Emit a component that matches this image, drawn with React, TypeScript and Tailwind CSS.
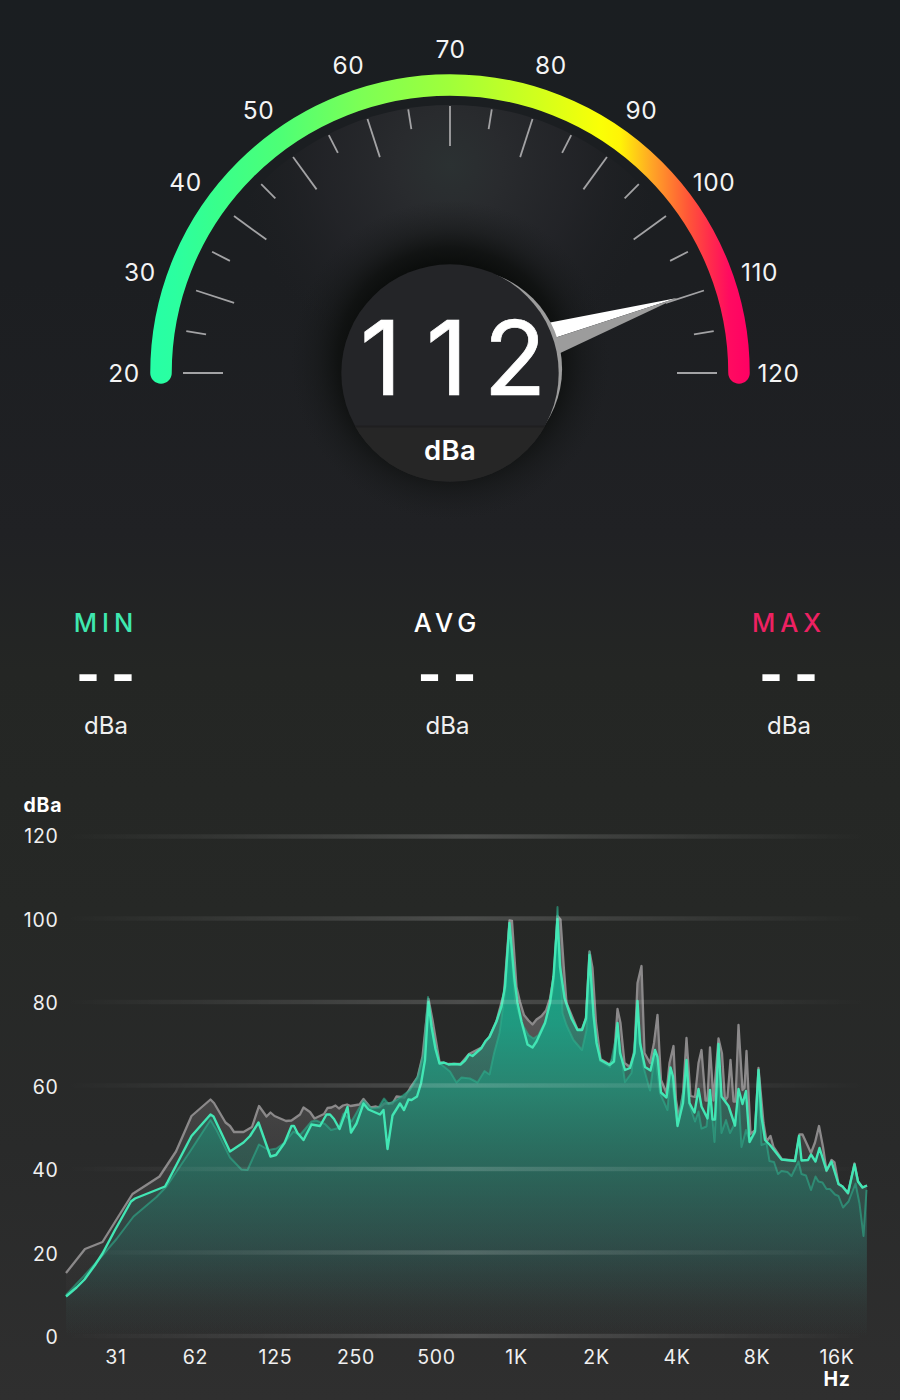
type Point = [number, number]

const CX = 450
const CY = 373

const gaugeLabels = [
  { value: 20, x: 124, y: 382 },
  { value: 30, x: 140, y: 281 },
  { value: 40, x: 185.5, y: 191 },
  { value: 50, x: 258.5, y: 119 },
  { value: 60, x: 348.5, y: 73.5 },
  { value: 70, x: 450.5, y: 58 },
  { value: 80, x: 551, y: 73.5 },
  { value: 90, x: 641.5, y: 119 },
  { value: 100, x: 714, y: 191 },
  { value: 110, x: 759.5, y: 281 },
  { value: 120, x: 778.5, y: 382 },
]

const arcStops = [
  { x: 150, color: '#26ffa6' },
  { x: 175, color: '#2bffa0' },
  { x: 216, color: '#38ff8c' },
  { x: 280, color: '#4dff76' },
  { x: 361, color: '#7cff55' },
  { x: 450, color: '#a0ff3a' },
  { x: 539, color: '#d2ff1c' },
  { x: 600, color: '#faff06' },
  { x: 620, color: '#fff406' },
  { x: 652, color: '#ffa526' },
  { x: 688, color: '#ff5638' },
  { x: 710, color: '#ff2c4c' },
  { x: 729, color: '#ff0b60' },
  { x: 750, color: '#ff0064' },
]

const stats = [
  { label: 'MIN', color: 'text-[#3fe8b0]' },
  { label: 'AVG', color: 'text-white' },
  { label: 'MAX', color: 'text-[#ee2162]' },
]

const gridLines = [
  { value: 120, y: 836.5 },
  { value: 100, y: 918.5 },
  { value: 80, y: 1002 },
  { value: 60, y: 1085.5 },
  { value: 40, y: 1169 },
  { value: 20, y: 1252.5 },
  { value: 0, y: 1336 },
]

const frequencies = [
  { label: '31', x: 116 },
  { label: '62', x: 195.5 },
  { label: '125', x: 275.5 },
  { label: '250', x: 356 },
  { label: '500', x: 436.5 },
  { label: '1K', x: 516.5 },
  { label: '2K', x: 596.5 },
  { label: '4K', x: 677 },
  { label: '8K', x: 757 },
  { label: '16K', x: 837 },
]

const peakTrace: Point[] = [
  [66, 1273], [85, 1249], [102.5, 1242], [116.5, 1219.5], [132.5, 1194], [159.5, 1176.5], [176, 1151.5],
  [191.5, 1116], [210.5, 1099.5], [214, 1103], [225.5, 1122.5], [230, 1126], [234, 1132], [243.5, 1132],
  [252, 1127], [259, 1106], [266.5, 1116.5], [270.5, 1112.5], [274.5, 1116], [286, 1121], [291.5, 1120.5],
  [300, 1114.5], [303.5, 1107.5], [310, 1112], [314.5, 1118.5], [324, 1114], [327.5, 1108], [331.5, 1107.5],
  [335.5, 1105.5], [339, 1108.5], [343, 1105.5], [347, 1104.5], [350.5, 1106], [359.5, 1104.5], [363.5, 1099],
  [370.5, 1107.5], [376, 1106.5], [379.5, 1107.5], [384.5, 1103.5], [392.5, 1103.5], [396.5, 1096.5],
  [404.5, 1097.5], [410.5, 1087.5], [417.5, 1077.5], [422.5, 1056.5], [428.5, 999], [432.5, 1020],
  [439.5, 1062], [448.5, 1064], [460.5, 1064], [469, 1054], [481.5, 1047.5], [489.5, 1036.5], [496.5, 1021],
  [504, 993], [509.5, 920.5], [512, 921], [516.5, 987], [520, 1002], [524, 1015], [528.5, 1020.5], [532.5, 1024.5],
  [536.5, 1019.5], [541.5, 1016], [546, 1010.5], [550, 998.5], [554, 975], [557.5, 916], [560.5, 919.5],
  [564, 970], [566.5, 1003], [577.5, 1029.5], [582, 1029.5], [586, 1018], [589.5, 951.5], [592.5, 968],
  [596, 1023], [600.5, 1059], [609.5, 1064.5], [614, 1058], [617.5, 1009], [620.5, 1023], [624.5, 1063],
  [630, 1067], [634.5, 1051], [637.5, 983], [641.5, 966], [644.5, 1053], [650, 1063], [654, 1043], [657.5, 1015],
  [661, 1080], [666.5, 1093], [669.5, 1063], [673.5, 1046], [676, 1100], [679, 1118], [683, 1094], [686.5, 1038],
  [690.5, 1096], [695, 1097], [698.5, 1063], [701.5, 1050], [705.5, 1100.5], [707.5, 1100.5], [710, 1047.5],
  [713.5, 1100.5], [718.5, 1038.5], [722, 1053.5], [725, 1100.5], [727.5, 1097], [730.5, 1060], [733.5, 1101.5],
  [735.5, 1101.5], [738.5, 1025], [742.5, 1090], [744.5, 1088], [746.5, 1051], [750.5, 1134], [755, 1130],
  [758.5, 1068], [763.5, 1123], [766.5, 1141.5], [770.5, 1136], [773.5, 1147], [782, 1159.5], [795, 1160.5],
  [799.5, 1134.5], [802.5, 1134.5], [811, 1153], [815, 1142.5], [819, 1126], [823, 1147], [826.5, 1171],
  [831.5, 1160], [834.5, 1162.5], [838.5, 1184], [842.5, 1186.5], [848, 1193.5], [854.5, 1163.5], [858, 1181.5],
  [862.5, 1187.5], [867, 1185.5],
]

const liveTrace: Point[] = [
  [66, 1296.5], [76.5, 1287.5], [84.5, 1279.5], [95, 1265], [102.5, 1253.5], [115, 1230], [131, 1201.5],
  [135, 1198.5], [165, 1186.5], [167.5, 1182], [191.5, 1136], [210.5, 1114.5], [213.5, 1116.5], [230, 1151.5],
  [243.5, 1142.5], [250, 1136], [258.5, 1122.5], [270.5, 1156.5], [276, 1155], [284.5, 1143], [291.5, 1126],
  [294, 1126], [297.5, 1133], [303.5, 1140], [311.5, 1124.5], [320, 1126], [326.5, 1114.5], [330, 1114.5],
  [334, 1119], [339.5, 1129], [347.5, 1107], [351, 1132.5], [356.5, 1123.5], [363.5, 1103.5], [368.5, 1109.5],
  [380, 1114.5], [383.5, 1110], [387.5, 1149], [392.5, 1115.5], [400, 1103.5], [404, 1110], [408.5, 1099.5],
  [411.5, 1100], [417, 1096.5], [421, 1083.5], [425, 1060], [428.5, 1002], [431.5, 1026.5], [435.5, 1049],
  [439.5, 1063.5], [444, 1062.5], [448.5, 1064.5], [454, 1064], [460.5, 1064.5], [465, 1060.5], [469, 1054.5],
  [472.5, 1056], [481.5, 1048], [485.5, 1041], [489.5, 1037], [496.5, 1021.5], [501.5, 1006.5], [505, 986.5],
  [509.5, 923], [514.5, 980], [517.5, 1003], [521.5, 1021.5], [527.5, 1044.5], [532.5, 1047.5], [536.5, 1041.5],
  [545, 1023], [550, 1003], [553.5, 976.5], [557.5, 919], [560, 966.5], [564.5, 998], [571.5, 1018.5],
  [577.5, 1030], [582, 1030], [586, 1018.5], [589.5, 955], [593.5, 1015], [596.5, 1043], [600.5, 1060],
  [609.5, 1065], [614, 1061.5], [617.5, 1023], [620, 1053], [625, 1070], [630, 1068], [634.5, 1053],
  [637.5, 1001], [640, 1043], [645, 1067], [650.5, 1070.5], [655, 1050], [657.5, 1057], [661, 1092.5],
  [666.5, 1097.5], [670.5, 1067.5], [673, 1076.5], [677.5, 1126], [683, 1103], [686.5, 1060], [689.5, 1103],
  [694.5, 1112.5], [698.5, 1089], [701.5, 1106.5], [707.5, 1118.5], [710, 1090], [712.5, 1119.5], [715, 1119.5],
  [718.5, 1044], [721.5, 1096.5], [728.5, 1106], [735, 1125.5], [738.5, 1089], [742.5, 1104], [746, 1091],
  [749.5, 1142], [755, 1131.5], [758.5, 1070], [761.5, 1116.5], [765, 1140], [770, 1145], [781.5, 1159.5],
  [786, 1160], [795, 1161], [799, 1136], [801.5, 1160.5], [808, 1160], [811, 1154.5], [815.5, 1161.5],
  [819.5, 1148], [826.5, 1170.5], [831.5, 1161.5], [838.5, 1184], [842.5, 1186.5], [848, 1193], [854.5, 1164.5],
  [858, 1181.5], [862.5, 1187.5], [867, 1185.5],
]

const averageTrace: Point[] = [
  [66, 1295], [83.5, 1276.5], [101.5, 1256.5], [116.5, 1239], [133.5, 1216.5], [156.5, 1197], [166.5, 1186.5],
  [190, 1151.5], [210.5, 1120], [216.5, 1130], [230, 1157.5], [241.5, 1169.5], [247.5, 1170], [259, 1144.5],
  [268.5, 1150], [276.5, 1148.5], [284, 1143], [293.5, 1131.5], [300, 1135], [311.5, 1121.5], [316, 1120.5],
  [325, 1124], [331, 1130], [338.5, 1128], [343.5, 1113.5], [351.5, 1121.5], [363.5, 1100.5], [371.5, 1108.5],
  [378.5, 1107.5], [384, 1098.5], [388.5, 1104], [396.5, 1100], [403.5, 1095], [410, 1090], [418, 1076],
  [423.5, 1054], [428, 997], [433, 1034], [439.5, 1063], [450, 1071.5], [456.5, 1082.5], [461.5, 1077.5],
  [470, 1078.5], [477.5, 1082.5], [484.5, 1071], [489.5, 1074.5], [494, 1053.5], [499.5, 1033], [505.5, 990],
  [509, 927], [515, 1000], [521.5, 1023], [528.5, 1035], [533.5, 1038.5], [538.5, 1035], [546, 1020],
  [553.5, 988], [557.5, 907], [562.5, 1013], [566.5, 1025], [573.5, 1040], [582, 1050], [586.5, 1030],
  [589.5, 952], [594, 1020], [600, 1061], [610, 1067], [617.5, 1030], [625, 1082], [631.5, 1073], [637.5, 1016],
  [643.5, 1067], [650, 1090.5], [655, 1053], [660, 1093], [667.5, 1110], [670.5, 1070], [677.5, 1123],
  [686.5, 1073], [689, 1103], [695, 1121.5], [698.5, 1111.5], [701.5, 1128.5], [706.5, 1126.5], [710, 1092],
  [714.5, 1142], [718.5, 1063], [721.5, 1133], [726, 1120], [730, 1133], [735, 1123], [738.5, 1096],
  [741.5, 1147], [746, 1130], [750, 1142], [755, 1133], [758.5, 1080], [761.5, 1145], [766.5, 1143],
  [769.5, 1161], [774, 1162], [778, 1174], [781.5, 1171], [787.5, 1172], [791.5, 1176], [798.5, 1161.5],
  [801.5, 1174], [806, 1175.5], [811, 1190], [815.5, 1176.5], [818.5, 1181.5], [822.5, 1182.5], [826.5, 1189],
  [830, 1189], [835, 1194.5], [838.5, 1196], [843, 1207.5], [848.5, 1201.5], [855.5, 1183.5], [859.5, 1203.5],
  [863.5, 1236], [866.5, 1190],
]

const line = (points: Point[]) => 'M' + points.map(([x, y]) => `${x} ${y}`).join('L')
const area = (points: Point[]) => `${line(points)}L867 1336L66 1336Z`

function Gauge() {
  const ticks = Array.from({ length: 21 }, (_, i) => {
    const angle = (i * 9 * Math.PI) / 180
    const inner = i % 2 === 0 ? 227 : 247
    return {
      x1: CX - 267 * Math.cos(angle),
      y1: CY - 267 * Math.sin(angle),
      x2: CX - inner * Math.cos(angle),
      y2: CY - inner * Math.sin(angle),
    }
  })

  return (
    <svg width="900" height="560" viewBox="0 0 900 560" className="block shrink-0">
      <defs>
        <linearGradient id="arc" gradientUnits="userSpaceOnUse" x1="150" y1="0" x2="750" y2="0">
          {arcStops.map((stop) => (
            <stop key={stop.x} offset={(stop.x - 150) / 600} stopColor={stop.color} />
          ))}
        </linearGradient>
        <radialGradient id="glow" gradientUnits="userSpaceOnUse" cx="450" cy="165" r="210">
          <stop offset="0" stopColor="#2b3132" />
          <stop offset="0.25" stopColor="#292b2e" />
          <stop offset="0.6" stopColor="#242529" stopOpacity="0.8" />
          <stop offset="1" stopColor="#1f2023" stopOpacity="0" />
        </radialGradient>
        <radialGradient id="shadow" gradientUnits="userSpaceOnUse" cx="450" cy="360" r="160">
          <stop offset="0.6" stopColor="#0b0d0c" />
          <stop offset="0.7" stopColor="#0e100f" stopOpacity="0.85" />
          <stop offset="0.82" stopColor="#131515" stopOpacity="0.45" />
          <stop offset="1" stopColor="#1a1c1e" stopOpacity="0" />
        </radialGradient>
        <clipPath id="dial">
          <circle cx={CX} cy={CY} r="109" />
        </clipPath>
      </defs>

      <circle cx={CX} cy={CY} r="268" fill="url(#glow)" />
      <circle cx={CX} cy="360" r="160" fill="url(#shadow)" />

      <path d="M161 373A289 288 0 0 1 739 373" fill="none" stroke="url(#arc)" strokeWidth="21.5" strokeLinecap="round" />

      {ticks.map((tick, i) => (
        <line key={i} {...tick} stroke="#a3a3a5" strokeWidth="1.8" />
      ))}

      {/* Needle */}
      <path d="M545 323.5L677 298L553 338.5Z" fill="#ffffff" />
      <path d="M553 338.5L677 298L555 355.5Z" fill="#9c9c9c" />
      <circle cx="462.3" cy="368.9" r="99.8" fill="#9c9c9c" />

      {/* Dial */}
      <circle cx={CX} cy={CY} r="108.7" fill="#242528" />
      <g clipPath="url(#dial)">
        <rect x="340" y="426" width="220" height="55.5" fill="#262626" />
        <rect x="340" y="425.5" width="220" height="2" fill="#1f1f20" />
      </g>
      <text x="360 426 483.5" y="395" fontSize="103" fill="#fff" stroke="#fff" strokeWidth="0.7">112</text>
      <text x="450" y="460" fontSize="27.5" fontWeight="600" letterSpacing="0.3" textAnchor="middle" fill="#fff">dBa</text>

      {gaugeLabels.map((label) => (
        <text key={label.value} x={label.x} y={label.y} fontSize="24.5" letterSpacing="0.6" textAnchor="middle" fill="#f4f4f4">
          {label.value}
        </text>
      ))}
    </svg>
  )
}

function Stat({ label, color }: { label: string; color: string }) {
  return (
    <div className="flex w-[120px] flex-col items-center">
      <span className={`-ml-1 pl-1 text-[25.5px] leading-[30px] font-medium tracking-[5px] ${color}`}>{label}</span>
      <span className="mt-[22px] pl-[10px] text-[51px] leading-[30px] font-extrabold tracking-[11px] text-white">--</span>
      <span className="mt-[21px] text-2xl leading-[30px] text-[#f0f0f0]">dBa</span>
    </div>
  )
}

function Spectrum() {
  return (
    <svg width="900" height="620" viewBox="0 780 900 620" className="block shrink-0">
      <defs>
        <linearGradient id="grid" gradientUnits="userSpaceOnUse" x1="66" y1="0" x2="866" y2="0">
          <stop offset="0" stopColor="#fff" stopOpacity="0" />
          <stop offset="0.5" stopColor="#fff" stopOpacity="0.17" />
          <stop offset="1" stopColor="#fff" stopOpacity="0" />
        </linearGradient>
        <linearGradient id="peak" gradientUnits="userSpaceOnUse" x1="0" y1="920" x2="0" y2="1336">
          <stop offset="0" stopColor="#a09c9e" stopOpacity="0.6" />
          <stop offset="0.3" stopColor="#8c888a" stopOpacity="0.42" />
          <stop offset="0.5" stopColor="#888486" stopOpacity="0.25" />
          <stop offset="0.85" stopColor="#808080" stopOpacity="0.05" />
          <stop offset="1" stopColor="#808080" stopOpacity="0" />
        </linearGradient>
        <linearGradient id="live" gradientUnits="userSpaceOnUse" x1="0" y1="920" x2="0" y2="1336">
          <stop offset="0" stopColor="#14b890" stopOpacity="0.75" />
          <stop offset="0.35" stopColor="#1c9078" stopOpacity="0.46" />
          <stop offset="0.6" stopColor="#24806b" stopOpacity="0.36" />
          <stop offset="0.8" stopColor="#2d706a" stopOpacity="0.2" />
          <stop offset="0.94" stopColor="#2f6058" stopOpacity="0.04" />
          <stop offset="1" stopColor="#339088" stopOpacity="0" />
        </linearGradient>
        <linearGradient id="average" gradientUnits="userSpaceOnUse" x1="0" y1="920" x2="0" y2="1336">
          <stop offset="0" stopColor="#0cab86" stopOpacity="0.88" />
          <stop offset="0.25" stopColor="#1ba084" stopOpacity="0.82" />
          <stop offset="0.4" stopColor="#258d76" stopOpacity="0.78" />
          <stop offset="0.6" stopColor="#276e60" stopOpacity="0.68" />
          <stop offset="0.8" stopColor="#2c5550" stopOpacity="0.5" />
          <stop offset="0.94" stopColor="#2f4845" stopOpacity="0.12" />
          <stop offset="1" stopColor="#2f4845" stopOpacity="0" />
        </linearGradient>
      </defs>

      <path d={area(peakTrace)} fill="url(#peak)" />
      <path d={line(peakTrace)} fill="none" stroke="#8b898a" strokeWidth="2.3" strokeLinejoin="round" />
      <path d={area(liveTrace)} fill="url(#live)" />
      <path d={area(averageTrace)} fill="url(#average)" />
      <path d={line(averageTrace)} fill="none" stroke="#2fae8c" strokeOpacity="0.6" strokeWidth="2" strokeLinejoin="round" />
      <path d={line(liveTrace)} fill="none" stroke="#42e6b4" strokeWidth="2.4" strokeLinejoin="round" />

      {gridLines.map((grid) => (
        <g key={grid.value}>
          <rect x="66" y={grid.y - 2.2} width="800" height="4.4" fill="url(#grid)" />
          <text x="58.5" y={grid.y + (grid.value === 120 ? 6.8 : 8)} fontSize="19.5" letterSpacing="0.7" textAnchor="end" fill="#f0f0f0">
            {grid.value}
          </text>
        </g>
      ))}

      {frequencies.map((frequency) => (
        <text key={frequency.label} x={frequency.x} y="1364" fontSize="19.5" letterSpacing="0.7" textAnchor="middle" fill="#f0f0f0">
          {frequency.label}
        </text>
      ))}

      <text x="23.5" y="812" fontSize="19.5" fontWeight="700" letterSpacing="0.8" fill="#fff">dBa</text>
      <text x="823.5" y="1385.5" fontSize="19.5" fontWeight="700" letterSpacing="0.8" fill="#fff">Hz</text>
    </svg>
  )
}

export default function App() {
  return (
    <div className="flex h-[1400px] w-[900px] flex-col overflow-hidden bg-[linear-gradient(180deg,#1a1e21_0%,#1c1e21_20%,#202124_38%,#242624_48%,#262826_65%,#292a2a_82%,#2f2f2f_100%)] font-['Inter',sans-serif]">
      <Gauge />
      <div className="flex h-[220px] justify-between pt-[48px] pr-[51px] pl-[46px]">
        {stats.map((stat) => (
          <Stat key={stat.label} {...stat} />
        ))}
      </div>
      <Spectrum />
    </div>
  )
}
